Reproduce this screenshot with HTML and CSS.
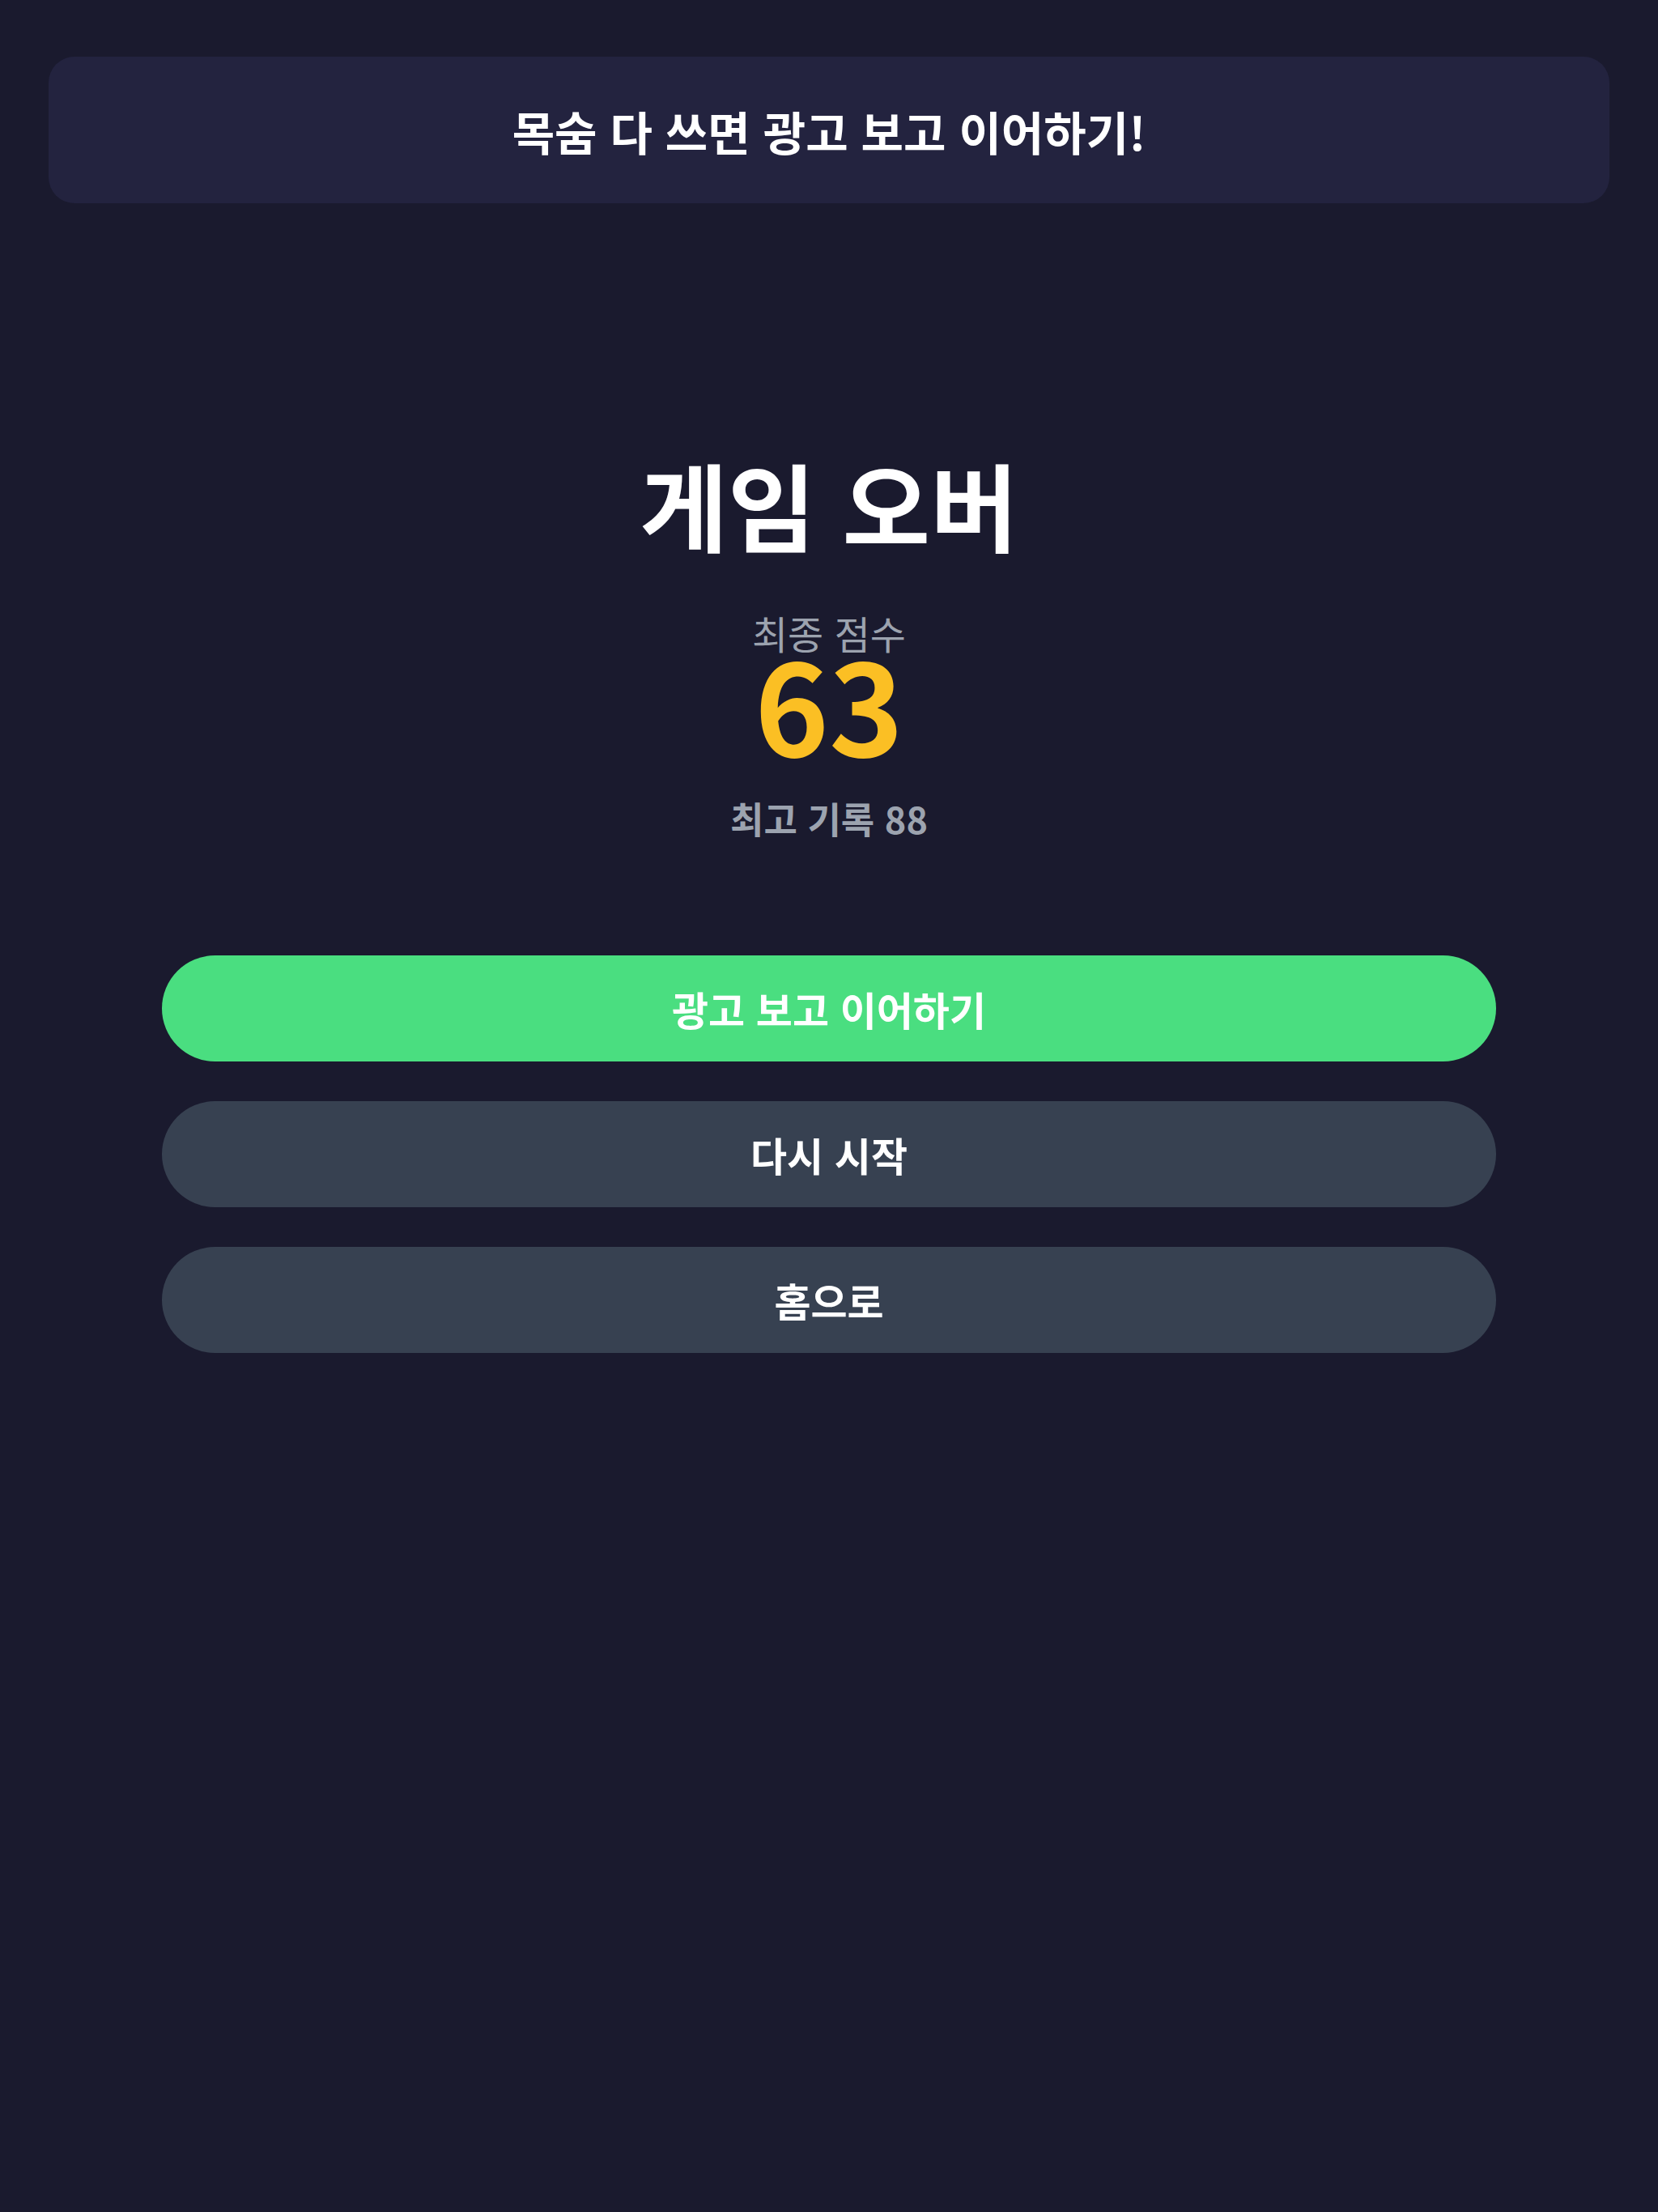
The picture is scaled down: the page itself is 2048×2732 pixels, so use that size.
FILE: index.html
```html
<!DOCTYPE html>
<html lang="ko">
<head>
    <meta charset="UTF-8" />
    <meta name="viewport" content="width=device-width, initial-scale=1.0" />
    <link rel="stylesheet" href="styles.css">
</head>
<body>
    <!-- Banner -->
    <div class="banner">목숨 다 쓰면 광고 보고 이어하기!</div>

    <div class="result">
        <h1 class="result-title">게임 오버</h1>
        <p class="score-label">최종 점수</p>
        <p class="score">63</p>
        <p class="best">최고 기록 88</p>
    </div>

    <div class="actions">
        <button class="action-button continue-button">광고 보고 이어하기</button>
        <button class="action-button">다시 시작</button>
        <button class="action-button">홈으로</button>
    </div>
</body>
</html>
```

FILE: styles.css
```css
body {
    font-family: "Noto Sans CJK KR", "Noto Sans", sans-serif;
    margin: 0;
    background-color: #1a1a2e;
    min-height: 2732px;
}
/* Banner */
.banner {
    margin: 70px 60px 0;
    height: 181px;
    border-radius: 32px;
    background-color: #23233f;
    color: white;
    font-size: 57px;
    font-weight: bold;
    display: flex;
    align-items: center;
    justify-content: center;
}
.result {
    display: flex;
    flex-direction: column;
    align-items: center;
    margin-top: 312px;
}
.result-title {
    margin: 0;
    font-size: 118px;
    line-height: 1;
    font-weight: bold;
    color: white;
}
.score-label {
    margin: 76px 0 0;
    font-size: 48px;
    line-height: 1;
    color: #9ca3af;
}
.score {
    margin: 0;
    font-size: 156px;
    line-height: 0.8;
    font-weight: bold;
    color: #fbbf24;
}
.best {
    margin: 58px 0 0;
    font-size: 45px;
    line-height: 1;
    font-weight: bold;
    color: #9ca3af;
}
.actions {
    display: flex;
    flex-direction: column;
    gap: 49px;
    margin: 147px 200px 0;
}
.action-button {
    height: 131px;
    border: none;
    border-radius: 66px;
    background-color: #374151;
    color: white;
    font-family: inherit;
    font-size: 49px;
    font-weight: bold;
    cursor: pointer;
}
.continue-button {
    background-color: #4ade80;
}
```
